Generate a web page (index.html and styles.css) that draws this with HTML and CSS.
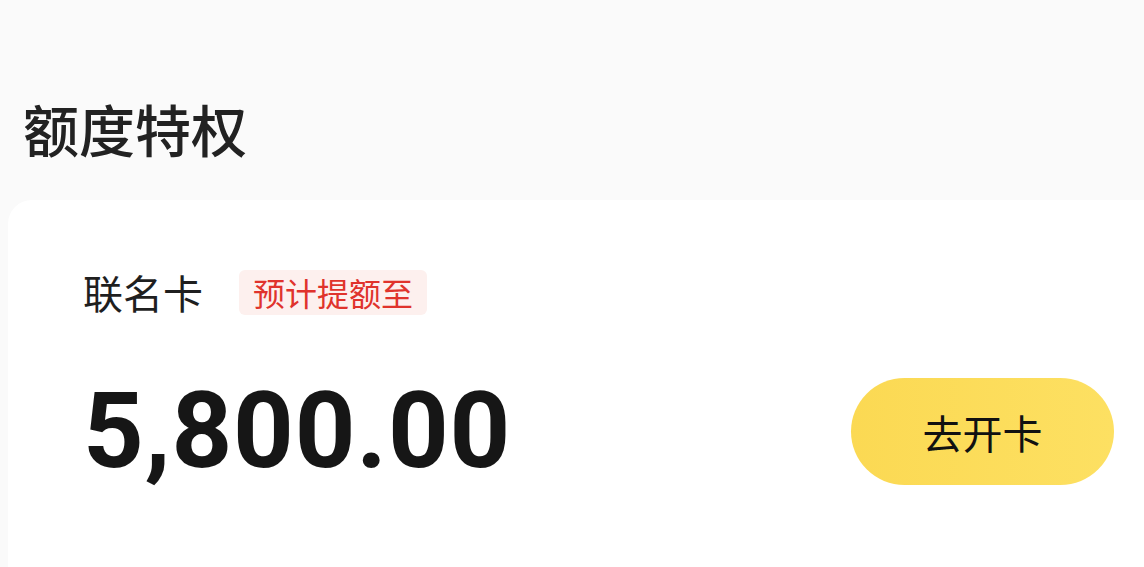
FILE: index.html
```html
<!DOCTYPE html>
<html lang="zh">
<head>
<meta charset="utf-8">
<link rel="stylesheet" href="styles.css">
</head>
<body>
<div class="page">
  <h1 class="title">额度特权</h1>
  <div class="card">
    <div class="row-top">
      <span class="card-name">联名卡</span>
      <span class="tag">预计提额至</span>
    </div>
    <div class="row-main">
      <span class="amount">5,800.00</span>
      <button class="btn">去开卡</button>
    </div>
  </div>
</div>
</body>
</html>
```
FILE: styles.css
```css
html, body {
  margin: 0;
  padding: 0;
  height: 100%;
  background: #fafafa;
  font-family: "Noto Sans CJK SC", "Noto Sans", sans-serif;
}
.page {
  display: flex;
  flex-direction: column;
  height: 567px;
  overflow: hidden;
}
.title {
  margin: 0;
  padding: 100px 0 0 23px;
  font-size: 56px;
  line-height: 56px;
  font-weight: 500;
  color: #222;
}
.card {
  margin: 44px 0 0 8px;
  flex: 1;
  background: #fff;
  border-radius: 24px 0 0 0;
  padding: 70px 30px 0 75px;
  display: flex;
  flex-direction: column;
  gap: 63px;
}
.row-top {
  display: flex;
  align-items: center;
  gap: 36px;
  height: 45px;
}
.card-name {
  font-size: 40px;
  line-height: 45px;
  color: #1f1f1f;
}
.tag {
  background: #fdf0ee;
  color: #e0332c;
  font-size: 32px;
  line-height: 45px;
  padding: 0 14px;
  border-radius: 6px;
}
.row-main {
  display: flex;
  align-items: center;
  justify-content: space-between;
  height: 107px;
}
.amount {
  font-family: Roboto, "Liberation Sans", sans-serif;
  font-weight: 700;
  font-size: 106px;
  line-height: 107px;
  color: #161616;
  letter-spacing: 0.8px;
}
.btn {
  width: 263px;
  height: 107px;
  border: none;
  border-radius: 54px;
  background: linear-gradient(90deg, #fbd953, #fde062);
  font-family: "Noto Sans CJK SC", sans-serif;
  font-size: 40px;
  color: #111;
  padding: 0;
}
```
